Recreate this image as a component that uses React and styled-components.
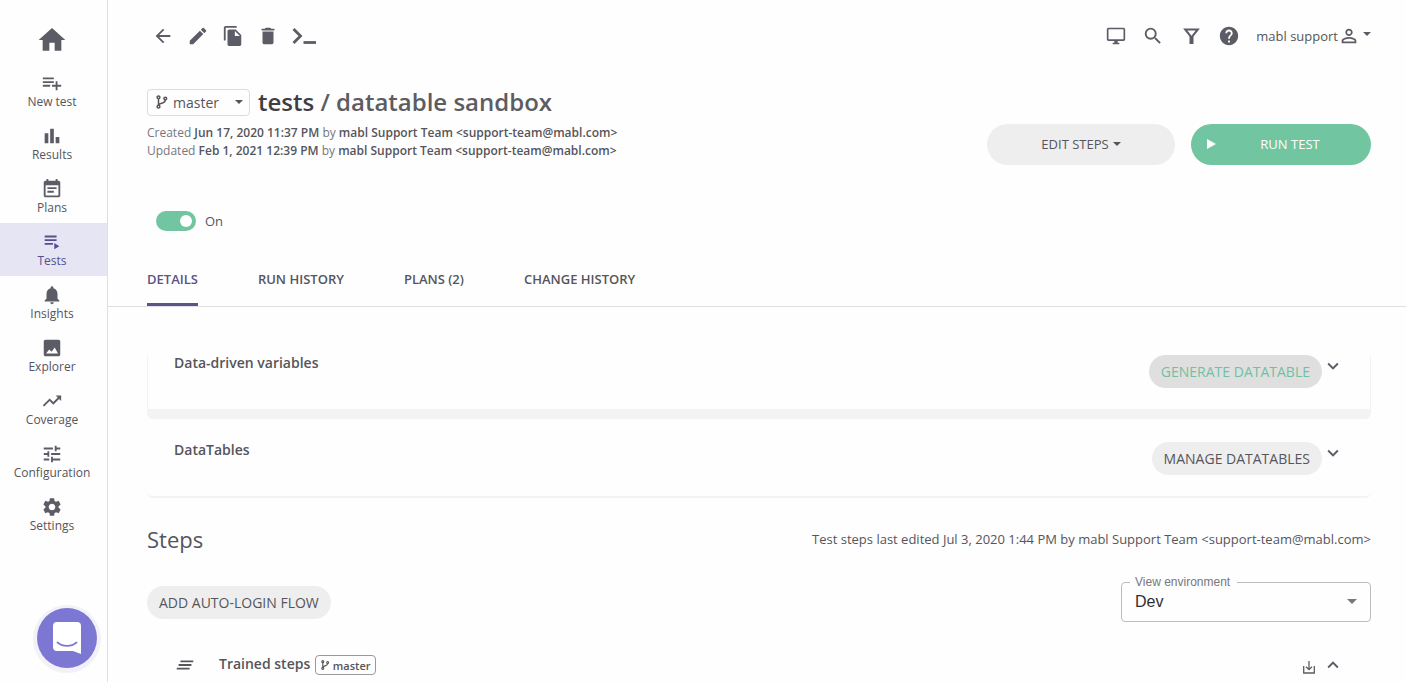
import styled, { createGlobalStyle } from "styled-components";
import {
  MdArrowBack,
  MdBarChart,
  MdClearAll,
  MdDelete,
  MdEdit,
  MdEventNote,
  MdExpandLess,
  MdExpandMore,
  MdHelp,
  MdHome,
  MdNotifications,
  MdOutlineDesktopWindows,
  MdPersonOutline,
  MdSearch,
  MdSettings,
  MdTrendingUp,
  MdTune,
} from "react-icons/md";

const GlobalStyle = createGlobalStyle`
  * {
    box-sizing: border-box;
  }
  body {
    margin: 0;
    background: #fefefe;
    color: #55555b;
    font-family: "Open Sans", "Noto Sans", sans-serif;
    font-size: 13px;
  }
  button, select {
    font-family: inherit;
    color: inherit;
    cursor: pointer;
  }
  svg {
    display: block;
    flex-shrink: 0;
  }
`;

const Layout = styled.div`
  display: flex;
  min-height: 100vh;
`;

const Sidebar = styled.nav`
  display: flex;
  flex-direction: column;
  flex-shrink: 0;
  width: 108px;
  border-right: 1px solid #e0e0e2;
`;

const HomeLink = styled.a`
  display: flex;
  justify-content: center;
  height: 64px;
  padding: 24px 3px 0 0;
  color: #5c5c66;
  font-size: 32px;
`;

const NavLink = styled.a`
  display: flex;
  flex-direction: column;
  align-items: center;
  height: 53px;
  padding: 8px 3px 0 0;
  color: ${({ $active }) => ($active ? "#55508f" : "#55555b")};
  background: ${({ $active }) => ($active ? "#e6e5f3" : "transparent")};
  font-size: 12px;
  line-height: 16px;
  text-decoration: none;

  svg {
    width: 22px;
    height: 22px;
    color: ${({ $active }) => ($active ? "#55508f" : "#5c5c66")};
  }
`;

const Main = styled.main`
  flex: 1;
  min-width: 0;
`;

const Content = styled.div`
  padding: 0 35px 0 39px;
`;

const TopBar = styled.header`
  display: flex;
  align-items: center;
  justify-content: space-between;
  height: 72px;
`;

const IconGroup = styled.div`
  display: flex;
  align-items: center;
  gap: ${({ $gap }) => $gap};
  padding-left: 5px;
`;

const IconButton = styled.button`
  display: flex;
  align-items: center;
  justify-content: center;
  padding: 0;
  border: 0;
  background: none;
  color: #5c5c66;
  font-size: ${({ $size }) => $size || "22px"};
`;

const UserButton = styled.button`
  display: flex;
  align-items: center;
  padding: 0;
  border: 0;
  background: none;
  font-size: 13px;
  line-height: 18px;

  svg {
    color: #5c5c66;
  }
`;

const UserCaret = styled.span`
  padding: 0 0 4px 3px;
`;

const Heading = styled.section`
  display: flex;
  justify-content: space-between;
  align-items: flex-end;
  padding-top: 16px;
`;

const TitleRow = styled.div`
  display: flex;
  align-items: center;
  gap: 8px;
  height: 28px;
`;

const BranchPicker = styled.label`
  display: flex;
  align-items: center;
  width: 103px;
  height: 27px;
  padding: 0 6px 0 8px;
  border: 1px solid #dcdcde;
  border-radius: 4px;
`;

const BranchSelect = styled.select`
  flex: 1;
  min-width: 0;
  padding: 0 0 0 5px;
  border: 0;
  appearance: none;
  background: none;
  font-size: 14px;
`;

const Title = styled.h1`
  margin: 0;
  color: #5c5c62;
  font-size: 24px;
  font-weight: 600;
  line-height: 28px;

  span {
    color: #3f3f43;
  }
`;

const Meta = styled.p`
  margin: 0;
  color: #77777c;
  font-size: 12px;
  line-height: 18px;

  b {
    color: #55555b;
    font-weight: 600;
  }
`;

const MetaBlock = styled.div`
  padding: 8px 0 5px;
`;

const Actions = styled.div`
  display: flex;
  gap: 16px;
`;

const EditButton = styled.button`
  display: flex;
  align-items: center;
  justify-content: center;
  gap: 4px;
  width: 188px;
  height: 41px;
  padding: 0 0 2px;
  border: 0;
  border-radius: 21px;
  background: #eeeeee;
  font-size: 13px;
`;

const RunButton = styled.button`
  display: grid;
  grid-template-columns: 18px 1fr;
  align-items: center;
  width: 180px;
  height: 41px;
  padding: 0 16px 2px;
  border: 0;
  border-radius: 21px;
  background: #71c5a0;
  color: #ffffff;
  font-size: 13px;
  font-weight: 500;
`;

const ToggleLabel = styled.label`
  display: flex;
  align-items: center;
  gap: 9px;
  width: max-content;
  margin: 46px 0 0 9px;
  font-size: 13px;
  line-height: 20px;
`;

const Toggle = styled.input`
  display: flex;
  align-items: center;
  width: 40px;
  height: 20px;
  margin: 0;
  padding: 0 4px;
  appearance: none;
  border-radius: 10px;
  background: #cccccc;

  &::before {
    content: "";
    width: 12px;
    height: 12px;
    border-radius: 50%;
    background: #ffffff;
  }
  &:checked {
    justify-content: flex-end;
    background: #71c5a0;
  }
`;

const Tabs = styled.div`
  display: flex;
  gap: 60px;
  margin-top: 21px;
  padding: 0 39px;
  border-bottom: 1px solid #dfdfe1;
`;

const Tab = styled.button`
  height: 54px;
  padding: 3px 0 0;
  border: 0;
  border-bottom: 3px solid ${({ $active }) => ($active ? "#5a5488" : "transparent")};
  background: none;
  color: ${({ $active }) => ($active ? "#5a5488" : "#55555b")};
  font-size: 13px;
  font-weight: 600;
`;

const Panels = styled.div`
  display: flex;
  flex-direction: column;
  gap: 23px;
  padding-top: 48px;
`;

const Panel = styled.section`
  border-bottom: ${({ $divider }) => $divider} solid #f3f3f3;
  border-radius: 0 0 6px 6px;
`;

const PanelRow = styled.div`
  display: flex;
  align-items: flex-start;
  justify-content: space-between;
  height: 54px;
  padding: 0 26px;
  border: solid ${({ $edges }) => ($edges ? "#f3f3f3" : "transparent")};
  border-width: 0 1px;
`;

const PanelTitle = styled.h2`
  margin: 0;
  font-size: 14px;
  font-weight: 600;
  line-height: 16px;
`;

const PanelActions = styled.div`
  display: flex;
  align-items: flex-start;
`;

const PillButton = styled.button`
  height: 33px;
  padding: 0 12px;
  border: 0;
  border-radius: 17px;
  background: ${({ $pressed }) => ($pressed ? "#dfdfdf" : "#eeeeee")};
  color: ${({ $pressed }) => ($pressed ? "#71c0a2" : "#55555b")};
  font-size: 14px;
`;

const StepsHeader = styled.div`
  display: flex;
  align-items: center;
  justify-content: space-between;
  margin-top: 25px;
  line-height: 32px;
`;

const StepsTitle = styled.h2`
  margin: 0;
  font-size: 22px;
  font-weight: 400;
`;

const StepsControls = styled.div`
  display: flex;
  align-items: flex-end;
  justify-content: space-between;
  margin-top: 21px;
`;

const AutoLogin = styled.div`
  padding-bottom: 3px;
`;

const EnvField = styled.fieldset`
  width: 250px;
  height: 46px;
  margin: 0;
  padding: 0 13px 0 8px;
  border: 1px solid #bcbcbe;
  border-radius: 4px;
  font-family: "Liberation Sans", Arial, sans-serif;

  legend {
    padding: 0 7px 0 5px;
    color: #77777c;
    font-size: 12px;
    line-height: 12px;
  }
`;

const EnvControl = styled.div`
  display: flex;
  align-items: center;
  height: 27px;
  color: #77777c;
`;

const EnvSelect = styled.select`
  flex: 1;
  padding: 0 0 0 5px;
  border: 0;
  appearance: none;
  background: none;
  color: #2f2f33;
  font-size: 16px;
`;

const TrainedRow = styled.div`
  display: flex;
  align-items: center;
  justify-content: space-between;
  margin-top: 32px;
  padding: 0 27px;
`;

const TrainedTitle = styled.div`
  display: flex;
  align-items: center;
  gap: 5px;

  > svg {
    margin-right: 18px;
  }
  h2 {
    padding-bottom: 2px;
  }
`;

const BranchTag = styled.span`
  display: flex;
  align-items: center;
  gap: 3px;
  height: 20px;
  padding: 0 5px;
  border: 1px solid #99999d;
  border-radius: 4px;
  font-size: 11px;
  font-weight: 600;
`;

const TrainedActions = styled.div`
  display: flex;
  align-items: center;
  gap: 7px;

  button:first-child {
    padding-top: 4px;
  }
`;

const ChatButton = styled.button`
  position: fixed;
  left: 37px;
  bottom: 14px;
  display: flex;
  align-items: center;
  justify-content: center;
  width: 60px;
  height: 60px;
  padding: 0;
  border: 0;
  border-radius: 50%;
  background: #7c77d3;
  box-shadow: 0 1px 0 4px #f2f1f7;
`;

const Caret = ({ width = 8 }) => (
  <svg width={width} height={width / 2} viewBox="0 0 8 4" fill="currentColor">
    <path d="M0 0h8L4 4z" />
  </svg>
);

const BranchIcon = ({ size = 14 }) => (
  <svg width={(size * 12) / 14} height={size} viewBox="0 0 12 14" fill="none" stroke="currentColor" strokeWidth="1.500">
    <circle cx="2.500" cy="2.300" r="1.400" />
    <circle cx="2.500" cy="11.700" r="1.400" />
    <circle cx="9.300" cy="3.600" r="1.400" />
    <path d="M2.500 3.700v6.600M9.300 5c0 4-5 2.500-6.500 4.800" />
  </svg>
);

const CopyIcon = () => (
  <svg width="22" height="22" viewBox="0 0 24 24" fill="currentColor">
    <path d="M16 1H4c-1.100 0-2 .9-2 2v14h2V3h12V1zm-1 4l6 6v10c0 1.100-.9 2-2 2H8c-1.100 0-2-.9-2-2V7c0-1.100.9-2 2-2h7zm-1 7h5.500L14 6.500V12z" />
  </svg>
);

const PlaylistAddIcon = () => (
  <svg viewBox="0 0 24 24" fill="currentColor">
    <path d="M14 10H2v2h12v-2zm0-4H2v2h12V6zm4 8v-4h-2v4h-4v2h4v4h2v-4h4v-2h-4zM2 16h8v-2H2v2z" />
  </svg>
);

const PlaylistPlayIcon = () => (
  <svg viewBox="0 0 24 24" fill="currentColor">
    <path d="M4 5h13v2H4zM4 9h13v2H4zM4 13h9v2H4zM14.500 13v7l5.500-3.500z" />
  </svg>
);

const ExplorerIcon = () => (
  <svg viewBox="0 0 24 24" fill="currentColor">
    <path d="M21 19V5c0-1.100-.9-2-2-2H5c-1.100 0-2 .9-2 2v14c0 1.100.9 2 2 2h14c1.100 0 2-.9 2-2zM5.500 18l3.500-4.500 2.500 2.500 3.500-4.500 3.500 6.500z" />
  </svg>
);

const PromptIcon = () => (
  <svg width="24" height="18" viewBox="0 0 24 18" fill="none" stroke="currentColor" strokeWidth="2.800">
    <path d="M1.500 2l7 7-7 7" />
    <path d="M11.500 15.500H24" />
  </svg>
);

const FilterIcon = () => (
  <svg width="22" height="22" viewBox="0 0 22 22" fill="none" stroke="currentColor" strokeWidth="2">
    <path d="M5.200 4.500h12.600L12.500 11v7h-2v-7z" />
  </svg>
);

const DownloadIcon = () => (
  <svg width="12" height="13" viewBox="0 0 12 13" fill="none" stroke="currentColor" strokeWidth="1.300">
    <path d="M6 0v8.500M3 5.700l3 3 3-3M.7 5v7h10.600V5" />
  </svg>
);

const ChatIcon = () => (
  <svg width="28" height="32" viewBox="0 0 28 32">
    <path d="M4 0h20a4 4 0 0 1 4 4v28l-8-3H4a4 4 0 0 1-4-4V4a4 4 0 0 1 4-4z" fill="#fff" />
    <path d="M4.500 20.500c5.500 4.500 13.500 4.500 19 0" fill="none" stroke="#7c77d3" strokeWidth="1.800" strokeLinecap="round" />
  </svg>
);

const navItems = [
  { label: "New test", icon: PlaylistAddIcon },
  { label: "Results", icon: MdBarChart },
  { label: "Plans", icon: MdEventNote },
  { label: "Tests", icon: PlaylistPlayIcon, active: true },
  { label: "Insights", icon: MdNotifications },
  { label: "Explorer", icon: ExplorerIcon },
  { label: "Coverage", icon: MdTrendingUp },
  { label: "Configuration", icon: MdTune },
  { label: "Settings", icon: MdSettings },
];

const tabs = ["DETAILS", "RUN HISTORY", "PLANS (2)", "CHANGE HISTORY"];

const App = () => {
  return (
    <Layout>
      <GlobalStyle />
      <Sidebar>
        <HomeLink href="#home" aria-label="Home">
          <MdHome />
        </HomeLink>
        {navItems.map(({ label, icon: Icon, active }) => (
          <NavLink key={label} href={`#${label}`} $active={active}>
            <Icon />
            {label}
          </NavLink>
        ))}
      </Sidebar>

      <Main>
        <Content>
          <TopBar>
            <IconGroup $gap="13px">
              <IconButton aria-label="Back"><MdArrowBack /></IconButton>
              <IconButton aria-label="Edit"><MdEdit /></IconButton>
              <IconButton aria-label="Duplicate"><CopyIcon /></IconButton>
              <IconButton aria-label="Delete"><MdDelete /></IconButton>
              <IconButton aria-label="Command line"><PromptIcon /></IconButton>
            </IconGroup>
            <IconGroup $gap="16px">
              <IconButton aria-label="Desktop app" $size="20px"><MdOutlineDesktopWindows /></IconButton>
              <IconButton aria-label="Search"><MdSearch /></IconButton>
              <IconButton aria-label="Filter"><FilterIcon /></IconButton>
              <IconButton aria-label="Help"><MdHelp /></IconButton>
              <UserButton>
                mabl support
                <MdPersonOutline size={22} />
                <UserCaret><Caret /></UserCaret>
              </UserButton>
            </IconGroup>
          </TopBar>

          <Heading>
            <div>
              <TitleRow>
                <BranchPicker>
                  <BranchIcon />
                  <BranchSelect aria-label="Branch">
                    <option>master</option>
                  </BranchSelect>
                  <Caret />
                </BranchPicker>
                <Title><span>tests</span> / datatable sandbox</Title>
              </TitleRow>
              <MetaBlock>
                <Meta>Created <b>Jun 17, 2020 11:37 PM</b> by <b>mabl Support Team &lt;support-team@mabl.com&gt;</b></Meta>
                <Meta>Updated <b>Feb 1, 2021 12:39 PM</b> by <b>mabl Support Team &lt;support-team@mabl.com&gt;</b></Meta>
              </MetaBlock>
            </div>
            <Actions>
              <EditButton>EDIT STEPS<Caret /></EditButton>
              <RunButton>
                <svg width="9" height="10" viewBox="0 0 9 10" fill="currentColor">
                  <path d="M0 0l9 5-9 5z" />
                </svg>
                RUN TEST
              </RunButton>
            </Actions>
          </Heading>

          <ToggleLabel>
            <Toggle type="checkbox" role="switch" defaultChecked />
            On
          </ToggleLabel>
        </Content>

        <Tabs role="tablist">
          {tabs.map((tab, i) => (
            <Tab key={tab} role="tab" aria-selected={i === 0} $active={i === 0}>{tab}</Tab>
          ))}
        </Tabs>

        <Content>
          <Panels>
            <Panel $divider="10px">
              <PanelRow $edges>
                <PanelTitle>Data-driven variables</PanelTitle>
                <PanelActions>
                  <PillButton $pressed>GENERATE DATATABLE</PillButton>
                  <IconButton aria-label="Expand variables"><MdExpandMore /></IconButton>
                </PanelActions>
              </PanelRow>
            </Panel>
            <Panel $divider="2px">
              <PanelRow>
                <PanelTitle>DataTables</PanelTitle>
                <PanelActions>
                  <PillButton>MANAGE DATATABLES</PillButton>
                  <IconButton aria-label="Expand DataTables"><MdExpandMore /></IconButton>
                </PanelActions>
              </PanelRow>
            </Panel>
          </Panels>

          <StepsHeader>
            <StepsTitle>Steps</StepsTitle>
            <span>Test steps last edited Jul 3, 2020 1:44 PM by mabl Support Team &lt;support-team@mabl.com&gt;</span>
          </StepsHeader>

          <StepsControls>
            <AutoLogin>
              <PillButton>ADD AUTO-LOGIN FLOW</PillButton>
            </AutoLogin>
            <EnvField>
              <legend><label htmlFor="environment">View environment</label></legend>
              <EnvControl>
                <EnvSelect id="environment">
                  <option>Dev</option>
                </EnvSelect>
                <Caret width={10} />
              </EnvControl>
            </EnvField>
          </StepsControls>

          <TrainedRow>
            <TrainedTitle>
              <MdClearAll size={22} />
              <PanelTitle>Trained steps</PanelTitle>
              <BranchTag><BranchIcon size={10} />master</BranchTag>
            </TrainedTitle>
            <TrainedActions>
              <IconButton aria-label="Download steps"><DownloadIcon /></IconButton>
              <IconButton aria-label="Collapse steps"><MdExpandLess /></IconButton>
            </TrainedActions>
          </TrainedRow>
        </Content>
      </Main>

      <ChatButton aria-label="Open chat"><ChatIcon /></ChatButton>
    </Layout>
  );
};

export default App;
